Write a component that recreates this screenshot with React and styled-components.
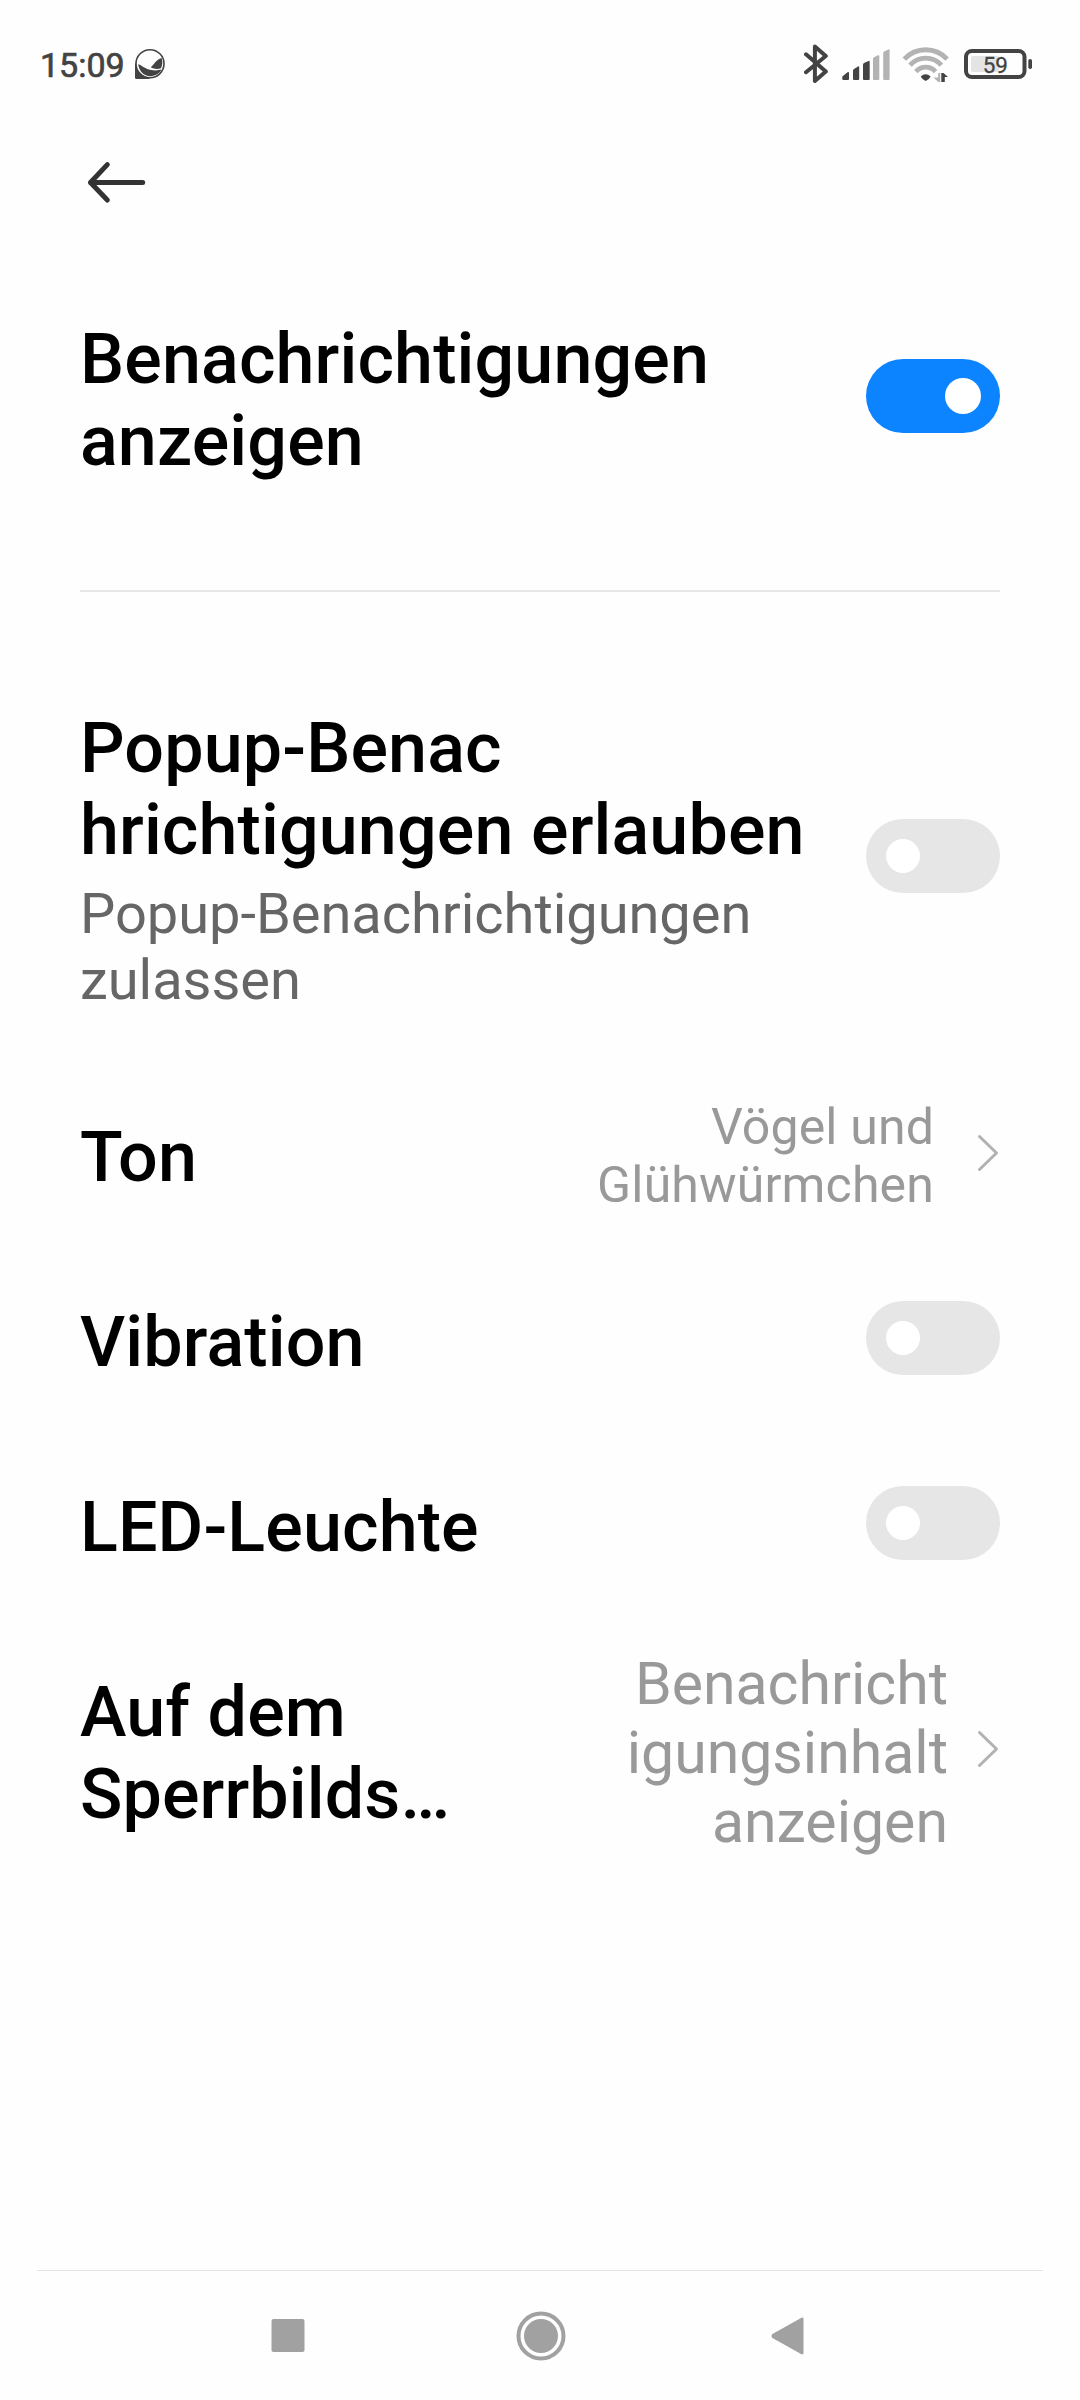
import React from "react";
import styled, {createGlobalStyle, ThemeProvider} from "styled-components";

const theme = {
    background: '#fefefe',
    black: '#000000',
    blue: '#0d84ff',
    track: '#e6e6e6',
    summary: '#666666',
    value: '#999999',
    chevron: '#b2b2b2',
    status: '#434343',
    statusLight: '#b3b3b3',
    nav: '#a1a1a1',
};

const GlobalStyle = createGlobalStyle`
    body {
      margin: 0;
      background-color: #fefefe;
      font-family: Roboto, sans-serif;
    }
`;

const ScreenWrapper = styled.div`
      display: flex;
      flex-direction: column;
      width: 1080px;
      height: 2400px;
      overflow: hidden;
      background-color: ${({theme}) => theme.background};
`;

const StatusBarWrapper = styled.div`
      display: flex;
      align-items: flex-start;
      justify-content: space-between;
      box-sizing: border-box;
      height: 128px;
      padding: 40px 48px 0 40px;
      color: ${({theme}) => theme.status};
`;

const StatusGroup = styled.div`
      display: flex;
      align-items: flex-start;

      svg {
         display: block;
      }
`;

const Clock = styled.div`
      width: 95px;
      font-size: 34px;
      line-height: 51px;
      -webkit-text-stroke: 0.7px currentColor;
`;

const StatusIcon = styled.svg`
      margin-left: ${({$gap}) => $gap || 0}px;
`;

const ActionBar = styled.div`
      display: flex;
      align-items: center;
      height: 110px;
      padding-left: 84px;
`;

const Section = styled.div`
      display: flex;
      flex-direction: column;
      padding: 0 80px;
`;

const Row = styled.div`
      display: flex;
      align-items: center;
      justify-content: space-between;
`;

const Label = styled.div`
      padding: 51px 0 52px;
`;

const Title = styled.div`
      font-size: 70px;
      font-weight: 500;
      line-height: 82px;
      letter-spacing: 0.13px;
      color: ${({theme}) => theme.black};
      white-space: pre;
`;

const Summary = styled.div`
      margin-top: 10px;
      font-size: 56px;
      line-height: 66px;
      letter-spacing: -0.04px;
      color: ${({theme}) => theme.summary};
      white-space: pre;
`;

const ValueWrapper = styled.div`
      display: flex;
      align-items: center;
`;

const Value = styled.div`
      margin-right: ${({$large}) => $large ? 29 : 43}px;
      margin-bottom: ${({$large}) => $large ? 2 : 3}px;
      font-size: ${({$large}) => $large ? 59 : 50}px;
      line-height: ${({$large}) => $large ? 69 : 58}px;
      letter-spacing: ${({$large}) => $large ? 0 : 0.15}px;
      color: ${({theme}) => theme.value};
      text-align: right;
      white-space: pre;
`;

const Chevron = styled.svg`
      display: block;
      margin-bottom: 9px;
`;

const Track = styled.div`
      display: flex;
      align-items: center;
      justify-content: ${({$on}) => $on ? 'flex-end' : 'flex-start'};
      box-sizing: border-box;
      width: 134px;
      height: 74px;
      margin-bottom: 9px;
      padding: 0 ${({$on}) => $on ? 19 : 20}px;
      border-radius: 37px;
      background-color: ${({$on, theme}) => $on ? theme.blue : theme.track};
`;

const Knob = styled.div`
      width: ${({$on}) => $on ? 36 : 34}px;
      height: ${({$on}) => $on ? 36 : 34}px;
      border-radius: 50%;
      background-color: #ffffff;
`;

const Divider = styled.div`
      height: 2px;
      margin: 0 80px;
      background-color: ${({theme}) => theme.track};
`;

const Spacer = styled.div`
      flex: 0 0 ${({$height}) => $height}px;
`;

const NavBar = styled.div`
      display: flex;
      align-items: center;
      justify-content: space-between;
      height: 129px;
      margin: auto 37px 0;
      padding: 0 239px 0 234px;
      border-top: 1px solid #e4e4e4;
`;

const Toggle = ({on}) => (
    <Track $on={on}>
        <Knob $on={on}/>
    </Track>
);

const ToggleRow = ({title, summary, on}) => (
    <Row>
        <Label>
            <Title>{title}</Title>
            {summary ? <Summary>{summary}</Summary> : null}
        </Label>
        <Toggle on={on}/>
    </Row>
);

const ValueRow = ({title, value, large}) => (
    <Row>
        <Label>
            <Title>{title}</Title>
        </Label>
        <ValueWrapper>
            <Value $large={large}>{value}</Value>
            <Chevron width="23" height="42" viewBox="0 0 23 42" fill="none">
                <path d="M2.5 4.5L19.5 21L2.5 37.5" stroke={theme.chevron} strokeWidth="3"
                      strokeLinecap="round" strokeLinejoin="round"/>
            </Chevron>
        </ValueWrapper>
    </Row>
);

const StatusBar = () => (
    <StatusBarWrapper>
        <StatusGroup>
            <Clock>15:09</Clock>
            <StatusIcon width="30" height="48" viewBox="0 0 30 48">
                <path d="M0 23V37.5Q0 39 1.5 39H15Z" fill={theme.status}/>
                <circle cx="15" cy="23.7" r="14" fill={theme.background} stroke={theme.status} strokeWidth="1.6"/>
                <path d="M3.2 24C7 25.5 9.5 28.5 15 29.7C19.5 30.8 23 30.6 26.5 29.6C24.5 33.5 20.5 36.2 15.5 36.2C9 36.2 3.8 31 3.2 24Z"
                      fill={theme.status}/>
                <path d="M15.7 27.3C19 25 21 19.5 26.6 18C27.8 21.5 27.5 25 26 28.3C22.5 29.4 18.8 29 15.7 27.3Z"
                      fill={theme.status}/>
            </StatusIcon>
        </StatusGroup>
        <StatusGroup>
            <StatusIcon width="25" height="48" viewBox="0 0 25 48" fill="none">
                <path d="M2 14.3L21.8 31.6L10.9 41V6.5L21.8 16L2 32.2" stroke={theme.status}
                      strokeWidth="4" strokeLinecap="round" strokeLinejoin="round"/>
            </StatusIcon>
            <StatusIcon $gap={13} width="48" height="48" viewBox="0 0 48 48" fill={theme.status}>
                <path d="M0.3 36.5L5.5 32.2Q7 31.5 7 33V39Q7 40 6 40H1.3Q0.3 40 0.3 39Z"/>
                <path d="M11 30.5Q11 29.5 12 29L16 26.5Q17.2 26 17.2 27.3V39Q17.2 40 16.2 40H12Q11 40 11 39Z"/>
                <path d="M21 24.5Q21 23.5 22 23L26.5 20.9Q27.7 20.5 27.7 21.7V39Q27.7 40 26.7 40H22Q21 40 21 39Z"/>
                <path d="M31 18.7Q31 17.7 32 17.2L36 15.3Q37.3 14.8 37.3 16V39Q37.3 40 36.3 40H32Q31 40 31 39Z"
                      fill={theme.statusLight}/>
                <path d="M41.2 13Q41.2 12 42.2 11.5L46.3 9.5Q47.6 9 47.6 10.2V39Q47.6 40 46.6 40H42.2Q41.2 40 41.2 39Z"
                      fill={theme.statusLight}/>
            </StatusIcon>
            <StatusIcon $gap={12} width="48" height="48" viewBox="0 0 48 48" fill="none">
                <g stroke={theme.statusLight} strokeWidth="4.8">
                    <path d="M2.3 19.2A29 29 0 0 1 45.1 19.2"/>
                    <path d="M8 25.2A21 21 0 0 1 39.4 25.2"/>
                    <path d="M13.9 31.6A13 13 0 0 1 33.5 31.6"/>
                </g>
                <path d="M18.7 36.4Q23.7 32 28.6 36.4Q27.5 39 23.7 41Q19.8 39 18.7 36.4Z" fill={theme.status}/>
                <path d="M36.2 33H38.2V42H36.2L31.5 37.5H36.2Z" fill={theme.statusLight}/>
                <path d="M39.3 42V33H41.5L46 37H42.8V42Z" fill={theme.status}/>
            </StatusIcon>
            <StatusIcon $gap={14} width="68" height="48" viewBox="0 0 68 48" fill="none">
                <rect x="2" y="11" width="58.5" height="26" rx="6" stroke={theme.status} strokeWidth="4"/>
                <rect x="7" y="16" width="28" height="16" rx="2" fill="#e4e4e4"/>
                <rect x="64.3" y="19" width="3.7" height="10" rx="1.8" fill={theme.status}/>
                <text x="31.3" y="32.6" textAnchor="middle" fontFamily="Roboto" fontSize="22.5"
                      fill={theme.status} stroke={theme.status} strokeWidth="0.3">59
                </text>
            </StatusIcon>
        </StatusGroup>
    </StatusBarWrapper>
);

const App = () => {
    return (
        <ThemeProvider theme={theme}>
            <GlobalStyle/>
            <ScreenWrapper>
                <StatusBar/>
                <ActionBar>
                    <svg width="64" height="48" viewBox="0 0 64 48" fill="none">
                        <path d="M23.3 5.6L6.5 23.5L23.3 41M6.5 23.5H58.7" stroke="#333333"
                              strokeWidth="5" strokeLinecap="round" strokeLinejoin="round"/>
                    </svg>
                </ActionBar>
                <Spacer $height={29}/>
                <Section>
                    <ToggleRow title={'Benachrichtigungen\nanzeigen'} on/>
                </Section>
                <Spacer $height={56}/>
                <Divider/>
                <Spacer $height={64}/>
                <Section>
                    <ToggleRow title={'Popup-Benac\nhrichtigungen erlauben'}
                               summary={'Popup-Benachrichtigungen\nzulassen'}/>
                    <ValueRow title="Ton" value={'Vögel und\nGlühwürmchen'}/>
                    <ToggleRow title="Vibration"/>
                    <ToggleRow title="LED-Leuchte"/>
                    <ValueRow title={'Auf dem\nSperrbilds…'} value={'Benachricht\nigungsinhalt\nanzeigen'} large/>
                </Section>
                <NavBar>
                    <svg width="34" height="34" viewBox="0 0 34 34">
                        <rect x="0.5" y="0" width="33" height="33" rx="2" fill={theme.nav}/>
                    </svg>
                    <svg width="55" height="50" viewBox="-5 0 55 50" fill="none">
                        <circle cx="25" cy="25" r="22.5" stroke={theme.nav} strokeWidth="4"/>
                        <circle cx="25" cy="25" r="17" fill={theme.nav}/>
                    </svg>
                    <svg width="33" height="38" viewBox="0 0 33 38">
                        <path d="M1 17.3Q0 19 1 20.7L30.5 37.3Q32.5 38 32.5 36V2Q32.5 0 30.5 0.7Z"
                              fill={theme.nav}/>
                    </svg>
                </NavBar>
            </ScreenWrapper>
        </ThemeProvider>
    )
};

export default App;
